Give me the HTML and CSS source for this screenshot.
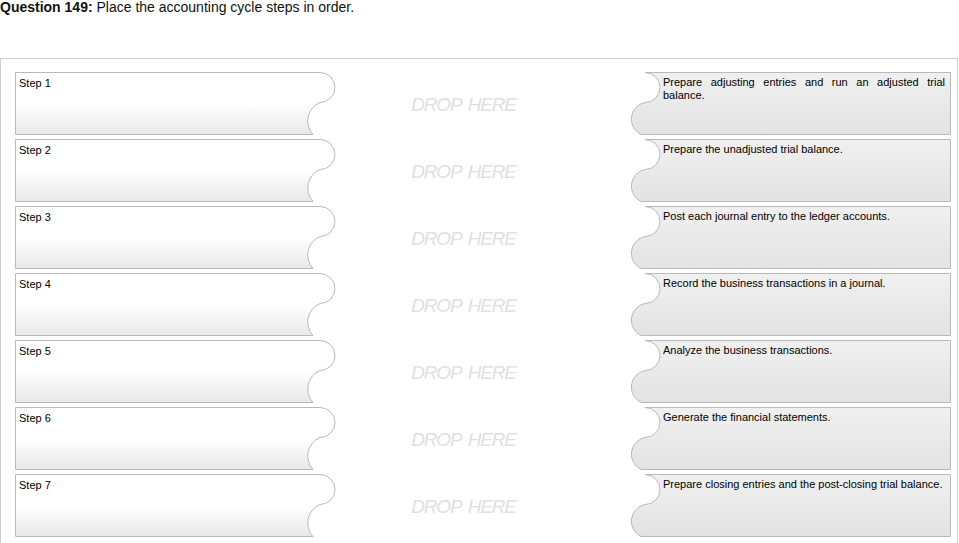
FILE: index.html
```html
<!DOCTYPE html>
<html lang="en">
<head>
<meta charset="utf-8">
<title>Question 149</title>
<link rel="stylesheet" href="styles.css">
</head>
<body>
<svg class="defs" width="0" height="0" aria-hidden="true">
  <defs>
    <linearGradient id="gLeft" x1="0" y1="0" x2="0" y2="1">
      <stop offset="0" stop-color="#ffffff"/>
      <stop offset="0.5" stop-color="#ffffff"/>
      <stop offset="1" stop-color="#e8e8e8"/>
    </linearGradient>
    <linearGradient id="gRight" x1="0" y1="0" x2="0" y2="1">
      <stop offset="0" stop-color="#f0f0f0"/>
      <stop offset="1" stop-color="#e3e3e3"/>
    </linearGradient>
  </defs>
</svg>
<h1 class="title"><b>Question 149:</b> Place the accounting cycle steps in order.</h1>
<div class="board">
  <div class="row">
    <div class="piece left"><svg class="shape" width="321" height="63"><path d="M0.5,0.5 H305 A15,15 0 0 1 305,30.5 A20,20 0 0 0 298,62.5 H0.5 Z"/></svg><div class="label">Step 1</div></div>
    <div class="drop">DROP HERE</div>
    <div class="piece right"><svg class="shape" width="320" height="63"><path d="M14,0.5 H319.5 V62.5 H10 A17,17 0 0 1 14,30.5 A15,15 0 0 0 14,0.5 Z"/></svg><div class="text">Prepare adjusting entries and run an adjusted trial balance.</div></div>
  </div>
  <div class="row">
    <div class="piece left"><svg class="shape" width="321" height="63"><path d="M0.5,0.5 H305 A15,15 0 0 1 305,30.5 A20,20 0 0 0 298,62.5 H0.5 Z"/></svg><div class="label">Step 2</div></div>
    <div class="drop">DROP HERE</div>
    <div class="piece right"><svg class="shape" width="320" height="63"><path d="M14,0.5 H319.5 V62.5 H10 A17,17 0 0 1 14,30.5 A15,15 0 0 0 14,0.5 Z"/></svg><div class="text">Prepare the unadjusted trial balance.</div></div>
  </div>
  <div class="row">
    <div class="piece left"><svg class="shape" width="321" height="63"><path d="M0.5,0.5 H305 A15,15 0 0 1 305,30.5 A20,20 0 0 0 298,62.5 H0.5 Z"/></svg><div class="label">Step 3</div></div>
    <div class="drop">DROP HERE</div>
    <div class="piece right"><svg class="shape" width="320" height="63"><path d="M14,0.5 H319.5 V62.5 H10 A17,17 0 0 1 14,30.5 A15,15 0 0 0 14,0.5 Z"/></svg><div class="text">Post each journal entry to the ledger accounts.</div></div>
  </div>
  <div class="row">
    <div class="piece left"><svg class="shape" width="321" height="63"><path d="M0.5,0.5 H305 A15,15 0 0 1 305,30.5 A20,20 0 0 0 298,62.5 H0.5 Z"/></svg><div class="label">Step 4</div></div>
    <div class="drop">DROP HERE</div>
    <div class="piece right"><svg class="shape" width="320" height="63"><path d="M14,0.5 H319.5 V62.5 H10 A17,17 0 0 1 14,30.5 A15,15 0 0 0 14,0.5 Z"/></svg><div class="text">Record the business transactions in a journal.</div></div>
  </div>
  <div class="row">
    <div class="piece left"><svg class="shape" width="321" height="63"><path d="M0.5,0.5 H305 A15,15 0 0 1 305,30.5 A20,20 0 0 0 298,62.5 H0.5 Z"/></svg><div class="label">Step 5</div></div>
    <div class="drop">DROP HERE</div>
    <div class="piece right"><svg class="shape" width="320" height="63"><path d="M14,0.5 H319.5 V62.5 H10 A17,17 0 0 1 14,30.5 A15,15 0 0 0 14,0.5 Z"/></svg><div class="text">Analyze the business transactions.</div></div>
  </div>
  <div class="row">
    <div class="piece left"><svg class="shape" width="321" height="63"><path d="M0.5,0.5 H305 A15,15 0 0 1 305,30.5 A20,20 0 0 0 298,62.5 H0.5 Z"/></svg><div class="label">Step 6</div></div>
    <div class="drop">DROP HERE</div>
    <div class="piece right"><svg class="shape" width="320" height="63"><path d="M14,0.5 H319.5 V62.5 H10 A17,17 0 0 1 14,30.5 A15,15 0 0 0 14,0.5 Z"/></svg><div class="text">Generate the financial statements.</div></div>
  </div>
  <div class="row">
    <div class="piece left"><svg class="shape" width="321" height="63"><path d="M0.5,0.5 H305 A15,15 0 0 1 305,30.5 A20,20 0 0 0 298,62.5 H0.5 Z"/></svg><div class="label">Step 7</div></div>
    <div class="drop">DROP HERE</div>
    <div class="piece right"><svg class="shape" width="320" height="63"><path d="M14,0.5 H319.5 V62.5 H10 A17,17 0 0 1 14,30.5 A15,15 0 0 0 14,0.5 Z"/></svg><div class="text">Prepare closing entries and the post-closing trial balance.</div></div>
  </div>
</div>
</body>
</html>
```
FILE: styles.css
```css
html, body {
  margin: 0;
  padding: 0;
  background: #ffffff;
}

body {
  font-family: Arial, "Liberation Sans", sans-serif;
  color: #000;
}

.defs {
  display: block;
  width: 0;
  height: 0;
  overflow: hidden;
}

.title {
  margin: 0 0 44px 0;
  font-size: 14px;
  line-height: 14px;
  font-weight: normal;
  color: #111;
  white-space: nowrap;
}

.title b {
  font-weight: bold;
}

.board {
  margin-right: 1px;
  border: 1px solid #cfcfcf;
  border-bottom: none;
  padding: 13px 0 13px 14px;
  display: flex;
  flex-direction: column;
  gap: 4px;
}

.row {
  display: grid;
  grid-template-columns: 321px 295px 320px;
  height: 63px;
}

.piece {
  display: grid;
  height: 63px;
}

.piece > .shape,
.piece > .label,
.piece > .text {
  grid-area: 1 / 1;
}

.shape {
  display: block;
}

.shape path {
  stroke: #b9b9b9;
  stroke-width: 1;
}

.left .shape path {
  fill: url(#gLeft);
}

.right .shape path {
  fill: url(#gRight);
}

.label {
  padding: 5px 4px 0 4px;
  font-size: 11px;
  line-height: 13px;
  z-index: 1;
}

.text {
  padding: 4px 6px 0 32px;
  font-size: 11px;
  line-height: 12.6px;
  text-align: justify;
  z-index: 1;
}

.drop {
  display: flex;
  align-items: center;
  justify-content: center;
  padding: 2px 40px 0 0;
  font-size: 19px;
  font-style: italic;
  letter-spacing: -1.2px;
  word-spacing: 3px;
  color: #e0e0e0;
  white-space: nowrap;
}
```
